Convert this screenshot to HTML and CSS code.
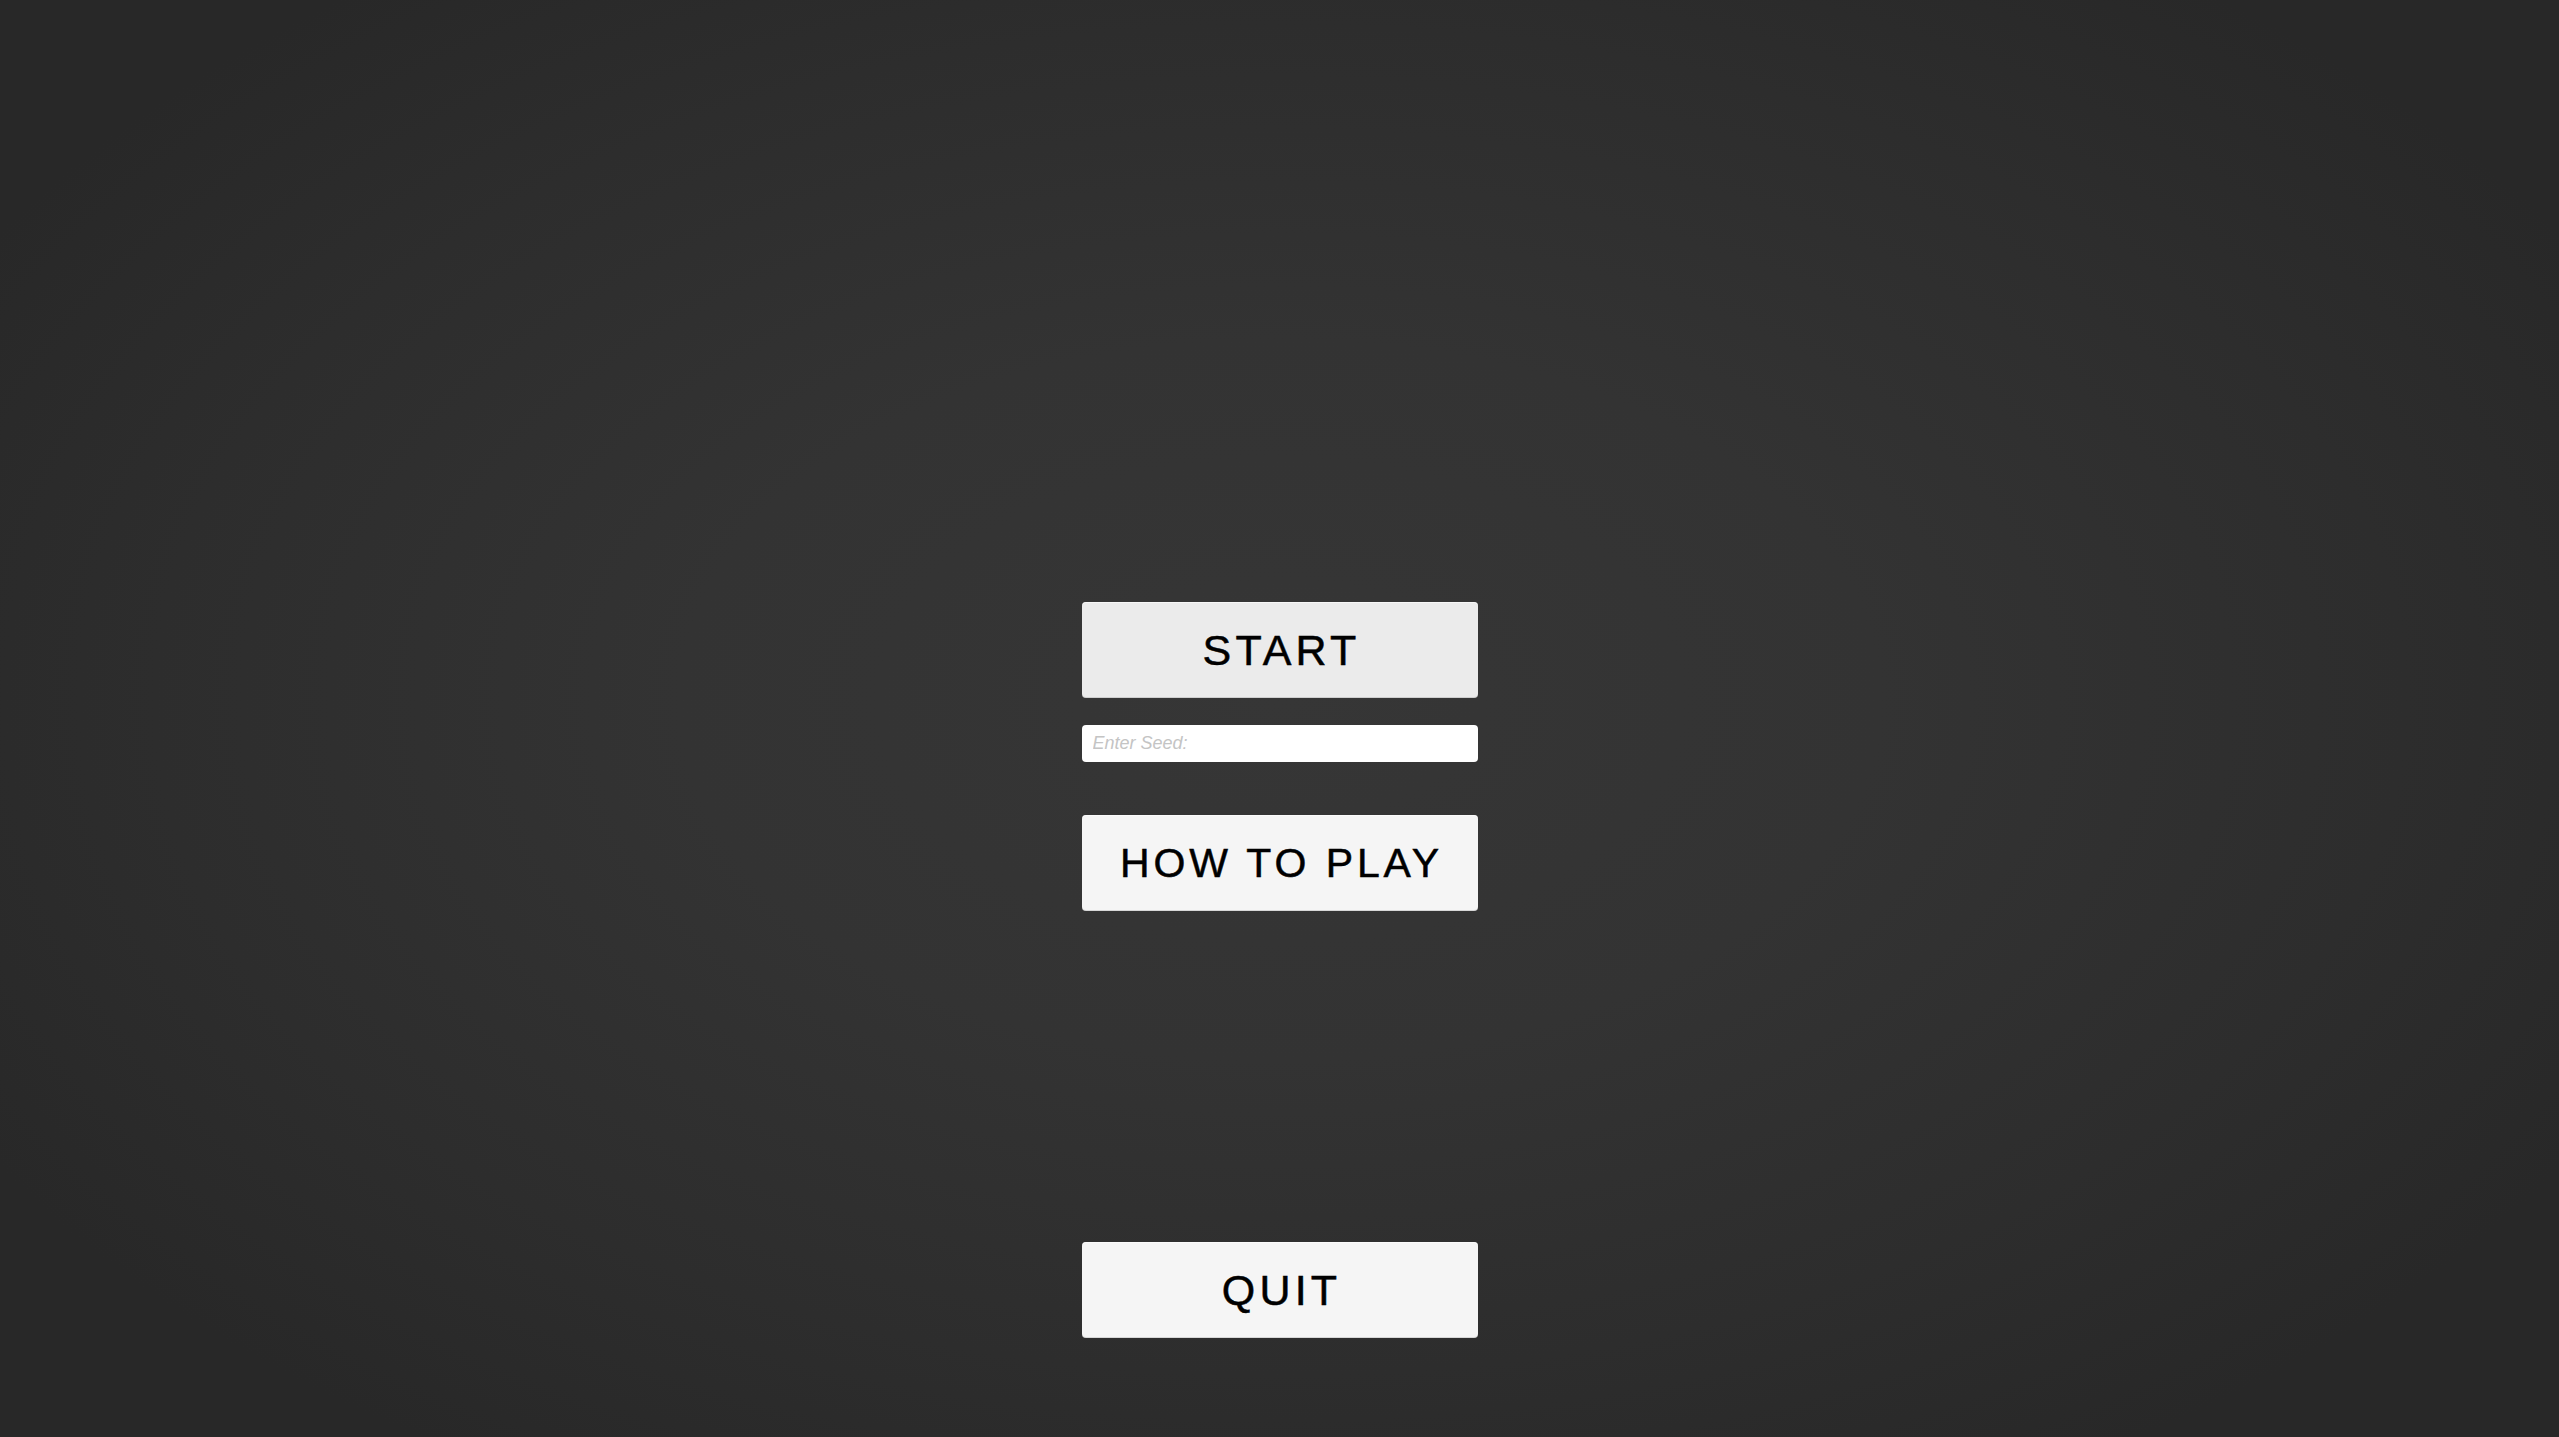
FILE: index.html
```html
<!DOCTYPE html>
<html lang="en">
<head>
<meta charset="utf-8">
<title>Main Menu</title>
<link rel="stylesheet" href="styles.css">
</head>
<body>
<main class="menu">
  <button class="btn btn-start" type="button">START</button>
  <input class="seed" type="text" placeholder="Enter Seed:">
  <button class="btn btn-how" type="button">HOW TO PLAY</button>
  <button class="btn btn-quit" type="button">QUIT</button>
</main>
</body>
</html>
```
FILE: styles.css
```css
html, body {
  margin: 0;
  padding: 0;
  width: 100%;
  height: 100%;
}
body {
  background: radial-gradient(ellipse 1500px 900px at 1280px 700px, #363636 0%, #333333 40%, #2d2d2d 75%, #282828 100%);
  background-color: #2a2a2a;
  font-family: "Liberation Sans", Arial, sans-serif;
  overflow: hidden;
}
.menu {
  display: flex;
  flex-direction: column;
  align-items: center;
  padding-top: 602px;
}
.btn {
  width: 396px;
  height: 96px;
  border: none;
  border-radius: 4px;
  background: #f5f5f5;
  color: #000;
  font-family: "Liberation Sans", Arial, sans-serif;
  font-size: 43px;
  letter-spacing: 4.2px;
  -webkit-text-stroke: 0.5px #000;
  padding: 0 0 0 4px;
  box-shadow: inset 0 -1px 0 rgba(0,0,0,0.12), inset 0 1px 0 rgba(255,255,255,0.6);
  cursor: pointer;
}
.btn-start {
  background: #ebebeb;
}
.btn-how {
  font-size: 41px;
  letter-spacing: 3.9px;
  margin-top: 53px;
}
.btn-quit {
  margin-top: 331px;
}
.seed {
  box-sizing: border-box;
  width: 396px;
  height: 37px;
  margin-top: 27px;
  border: none;
  border-radius: 4px;
  background: #ffffff;
  padding: 0 11px;
  font-family: "Liberation Sans", Arial, sans-serif;
  font-size: 18px;
  font-style: italic;
  color: #222;
  outline: none;
}
.seed::placeholder {
  color: #c4c4c4;
  font-style: italic;
}
```
